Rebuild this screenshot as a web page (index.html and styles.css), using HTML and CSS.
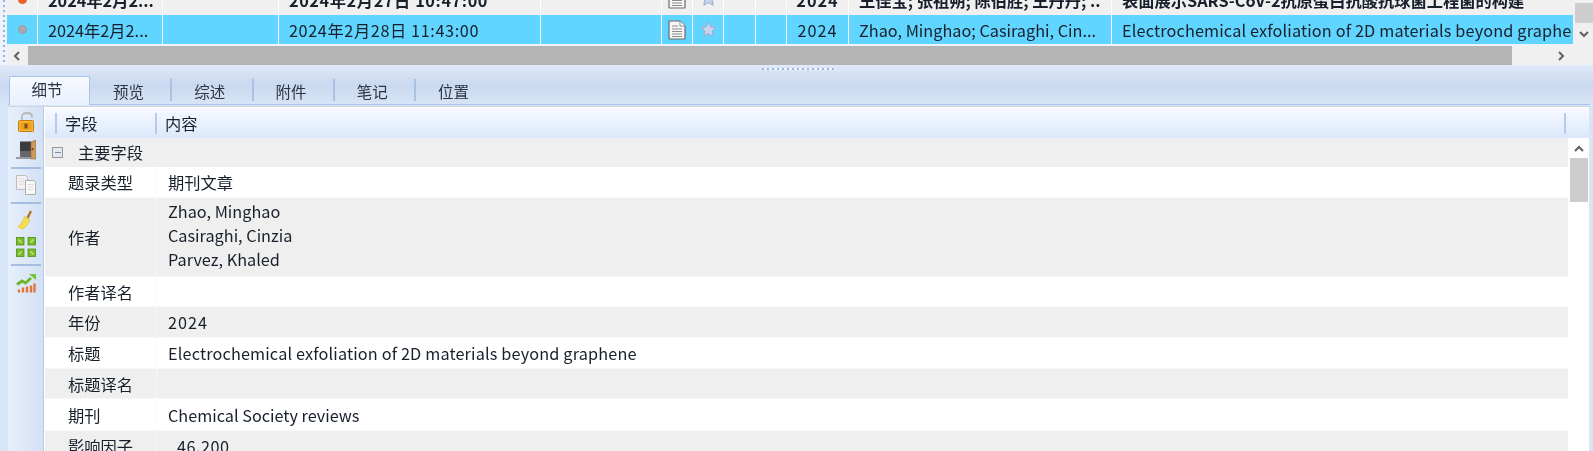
FILE: index.html
```html
<!DOCTYPE html>
<html lang="zh">
<head>
<meta charset="utf-8">
<title>文献详情</title>
<link rel="stylesheet" href="styles.css">
</head>
<body>
<svg class="defs" width="0" height="0" aria-hidden="true">
  <defs>
    <symbol id="doc" viewBox="0 0 18 20">
      <path d="M1 1h11l5 5v12.200q0 .8-.8.8H1.800q-.8 0-.8-.8z" fill="#f6f6f6" stroke="#6a6a6a" stroke-width="1.200"/>
      <path d="M12 1v5h5" fill="#fff" stroke="#8a8a8a"/>
      <path d="M4 6h6M4 9h10M4 11.500h10M4 14h10M4 16.500h10" stroke="#8d8d8d" stroke-width="1"/>
    </symbol>
    <symbol id="star" viewBox="0 0 18 18">
      <path d="M9 1l2.400 5.200 5.600.6-4.200 3.800 1.200 5.600L9 13.400l-5 2.800 1.200-5.600L1 6.800l5.600-.6z" fill="#c6d4ee" stroke="#9aa8c6" stroke-width="1"/>
    </symbol>
  </defs>
</svg>
<div class="edge-dots"></div>

<section class="list">
  <div class="row row-clipped">
    <div class="cell mark"><span class="dot dot-new"></span></div>
    <div class="cell"><span class="clip">2024年2月2...</span></div>
    <div class="cell"></div>
    <div class="cell"><span class="clip num">2024年2月27日 10:47:00</span></div>
    <div class="cell"></div>
    <div class="cell ico"><svg class="i-doc"><use href="#doc"/></svg></div>
    <div class="cell ico"><svg class="i-star"><use href="#star"/></svg></div>
    <div class="cell"></div>
    <div class="cell"></div>
    <div class="cell center"><span class="clip year">2024</span></div>
    <div class="cell"><span class="clip">王佳宝; 张祖朔; 陈伯胜; 王丹丹; ..</span></div>
    <div class="cell"><span class="clip">表面展示SARS-CoV-2抗原蛋白抗酸抗球菌工程菌的构建</span></div>
  </div>
  <div class="row row-selected">
    <div class="cell mark"><span class="dot"></span></div>
    <div class="cell"><span class="clip">2024年2月2...</span></div>
    <div class="cell"></div>
    <div class="cell"><span class="clip num">2024年2月28日 11:43:00</span></div>
    <div class="cell"></div>
    <div class="cell ico"><svg class="i-doc"><use href="#doc"/></svg></div>
    <div class="cell ico"><svg class="i-star"><use href="#star"/></svg></div>
    <div class="cell"></div>
    <div class="cell"></div>
    <div class="cell center"><span class="clip year">2024</span></div>
    <div class="cell"><span class="clip">Zhao, Minghao; Casiraghi, Cin...</span></div>
    <div class="cell"><span class="clip wide">Electrochemical exfoliation of 2D materials beyond graphene</span></div>
  </div>
  <div class="vbar">
    <div class="vthumb"></div>
    <svg class="chev" viewBox="0 0 12 8"><path d="M2 2l4 4 4-4" /></svg>
  </div>
</section>

<div class="hbar">
  <svg class="chev-h" viewBox="0 0 8 12"><path d="M6 2L2 6l4 4"/></svg>
  <div class="hthumb"></div>
  <svg class="chev-h" viewBox="0 0 8 12"><path d="M2 2l4 4-4 4"/></svg>
</div>

<section class="panel">
  <div class="grip"></div>
  <nav class="tabs">
    <span class="tab tab-on">细节</span>
    <span class="tab">预览</span>
    <span class="tab">综述</span>
    <span class="tab">附件</span>
    <span class="tab">笔记</span>
    <span class="tab">位置</span>
  </nav>

  <div class="body">
    <aside class="tools">
      <svg class="tool" viewBox="0 0 20 20">
        <path d="M6 9V4.500C6 2 8 1 11 1s5 1 5 3.500V6" fill="none" stroke="#b9b9b9" stroke-width="1.800"/>
        <rect x="2.500" y="8.500" width="15" height="11" rx="1" fill="#f6b52f" stroke="#c67d12"/>
        <rect x="4.500" y="10.500" width="11" height="7" fill="#eda01f"/>
        <rect x="8.500" y="11.500" width="3" height="5" fill="#7a4f10"/>
      </svg>
      <svg class="tool tool-door" viewBox="0 0 20 20">
        <path d="M0 18h15" stroke="#777" stroke-width="1.400"/>
        <rect x="4" y="1.500" width="11" height="15.500" fill="#3c3c40"/>
        <path d="M4 11h11v6H4z" fill="#66676c"/>
        <path d="M15 2l5-2v19h-5z" fill="#c99a5b" stroke="#94683a" stroke-width=".6"/>
        <rect x="15.800" y="8" width="1.500" height="2.400" fill="#6d4820"/>
      </svg>
      <hr class="sep">
      <svg class="tool" viewBox="0 0 20 20">
        <path d="M.5.500h9l2 2v12h-11z" fill="#f2f2f2" stroke="#bdbdbd"/>
        <path d="M2.500 4h6M2.500 6.500h6M2.500 9h6" stroke="#dcdcdc"/>
        <path d="M9.500 5.500h8l2 2v12h-10z" fill="#f8f8f8" stroke="#aeaeae"/>
        <path d="M11.500 9.500h6M11.500 12h6M11.500 14.500h6" stroke="#dcdcdc"/>
      </svg>
      <hr class="sep">
      <svg class="tool" viewBox="0 0 20 20">
        <path d="M11.500 8L15 1" stroke="#b0752a" stroke-width="2.400"/>
        <path d="M8.500 6.500l5 2.500c-.5 4-3 8-6.500 10-1.500 0-4-1-5-2.500C5 14 7.500 10.500 8.500 6.500z" fill="#f6dd4e" stroke="#dcb92f" stroke-width=".6"/>
      </svg>
      <svg class="tool tool-grid" viewBox="0 0 20 20">
        <g fill="#7dbd2a" stroke="#4c8f17" stroke-width=".8">
          <rect x=".5" y=".5" width="7.500" height="7.500"/>
          <rect x="12" y=".5" width="7.500" height="7.500"/>
          <rect x=".5" y="12" width="7.500" height="7.500"/>
          <rect x="12" y="12" width="7.500" height="7.500"/>
        </g>
        <path d="M2.500 2.500l3 3M17.500 2.500l-3 3M2.500 17.500l3-3M17.500 17.500l-3-3" fill="none" stroke="#c6e792" stroke-width="1.400"/>
      </svg>
      <hr class="sep">
      <svg class="tool tool-chart" viewBox="0 0 20 20">
        <path d="M1 11.500l5-3.500 3.500 2L15 5" fill="none" stroke="#6cb82a" stroke-width="3"/>
        <path d="M13 1h7v6z" fill="#7ac432"/>
        <path d="M3 19.500v-3M7 19.500v-5M11 19.500v-6M15 19.500v-7M18.500 19.500v-9" stroke="#e0763a" stroke-width="2.400"/>
      </svg>
    </aside>

    <div class="sheet">
      <header class="head">
        <span class="h-cell h-field">字段</span>
        <span class="h-cell h-value">内容</span>
      </header>
      <div class="scroll">
        <div class="rows">
          <div class="group"><span class="minus"></span><span class="group-label">主要字段</span></div>
          <div class="r r-31"><div class="k">题录类型</div><div class="v">期刊文章</div></div>
          <div class="r r-alt r-79"><div class="k">作者</div><div class="v v-lines">Zhao, Minghao<br>Casiraghi, Cinzia<br>Parvez, Khaled</div></div>
          <div class="r r-30"><div class="k">作者译名</div><div class="v"></div></div>
          <div class="r r-alt r-31"><div class="k">年份</div><div class="v"><span class="year">2024</span></div></div>
          <div class="r r-31"><div class="k">标题</div><div class="v wide">Electrochemical exfoliation of 2D materials beyond graphene</div></div>
          <div class="r r-alt r-30"><div class="k">标题译名</div><div class="v"></div></div>
          <div class="r r-32"><div class="k">期刊</div><div class="v">Chemical Society reviews</div></div>
          <div class="r r-alt r-31"><div class="k">影响因子</div><div class="v v-num">46.200</div></div>
        </div>
        <div class="sbar">
          <svg class="chev" viewBox="0 0 12 8"><path d="M2 6l4-4 4 4"/></svg>
          <div class="sthumb"></div>
        </div>
      </div>
    </div>
  </div>
</section>
</body>
</html>
```

FILE: styles.css
```css
* { box-sizing: border-box; }
html, body { margin: 0; height: 451px; overflow: hidden; }
body {
  width: 1593px;
  background: #eef3fb;
  font: 16.250px/24px "Noto Sans CJK SC", "Noto Sans", sans-serif;
  color: #18202c;
  display: flex;
  flex-direction: column;
  position: relative;
  filter: blur(.35px);
}
.defs { position: absolute; }
.edge-dots {
  position: absolute;
  left: 3px;
  top: 0;
  width: 2px;
  height: 76px;
  background: repeating-linear-gradient(#9db4d6 0 2px, transparent 2px 5px);
}

.list {
  height: 46px;
  padding-left: 7px;
  background: #eef3fb;
  display: grid;
  grid-template-columns: 1566px 20px;
  grid-template-rows: 15px 29px 2px;
}
.row {
  display: grid;
  grid-template-columns: 31px 125px 116px 262px 121px 31px 31px 32px 31px 62px 263px 1fr;
  grid-column: 1;
}
.row-clipped { background: #f0f0f0; font-weight: 700; }
.row-selected { background: #60d5ff; }
.cell {
  border-right: 1px solid #fff;
  padding-left: 10px;
  display: flex;
  align-items: center;
  overflow: hidden;
  white-space: nowrap;
  min-width: 0;
}
.row-clipped .cell { align-items: flex-end; }
.row-clipped .clip { margin-bottom: 3px; }
.row-clipped .i-doc { margin-bottom: 6px; }
.row-clipped .i-star { margin-bottom: 8px; }
.row-clipped .dot { margin-bottom: 11px; }
.cell:last-child { border-right: 0; }
.mark, .ico { justify-content: center; padding: 0; }
.center { padding: 0; justify-content: center; }
.dot { width: 9px; height: 9px; border-radius: 50%; background: #a6a9ad; border: 1px solid #9a9a9a; flex: none; }
.dot-new { background: #f4612a; border-color: #e0571f; }
.i-doc { width: 18px; height: 20px; flex: none; }
.i-star { width: 17px; height: 17px; flex: none; }
.num { letter-spacing: .6px; }
.year { letter-spacing: 1px; }
.wide { letter-spacing: .15px; }

.vbar {
  grid-column: 2;
  grid-row: 1 / 4;
  background: #f0f0f0;
  margin-left: 1px;
  display: flex;
  flex-direction: column;
  align-items: center;
}
.vthumb { width: 18px; height: 20px; margin-top: 3px; background: #cdcdcd; }
.chev { width: 12px; height: 8px; margin-top: 7px; fill: none; stroke: #606060; stroke-width: 2; flex: none; }

.hbar {
  height: 19px;
  margin-left: 7px;
  background: #f0f0f0;
  display: flex;
  align-items: center;
}
.chev-h { width: 8px; height: 12px; margin: 0 7px 0 6px; fill: none; stroke: #606060; stroke-width: 2; flex: none; }
.chev-h:last-child { margin: 0 0 0 45px; }
.hthumb { width: 1484px; height: 19px; background: #b4b4b4; flex: none; }

.panel {
  flex: 1;
  min-height: 0;
  padding-left: 8px;
  padding-right: 3px;
  background: linear-gradient(#dfeafa 0, #d4e1f3 10px, #c9d9ef 20px, #d8e5f8 40px);
  display: flex;
  flex-direction: column;
  position: relative;
}
.grip {
  position: absolute;
  left: 762px;
  top: 3px;
  width: 74px;
  height: 2px;
  background: repeating-linear-gradient(90deg, #9db4d6 0 2px, #eef4fc 2px 5px);
}
.tabs {
  height: 40px;
  padding-top: 11px;
  padding-left: 1px;
  display: flex;
  flex: none;
  border-bottom: 1px solid #a9c4e8;
}
.tab {
  width: 81.250px;
  height: 28px;
  padding-right: 4px;
  line-height: 31px;
  text-align: center;
  font-size: 15.500px;
  color: #2b3442;
  position: relative;
}
.tab + .tab:not(:nth-child(2))::before {
  content: "";
  position: absolute;
  left: -1px;
  top: 3px;
  bottom: 3px;
  width: 2px;
  background: #aac2e2;
}
.tab-on {
  width: 81px;
  height: 29px;
  margin-bottom: -1px;
  padding-right: 5px;
  line-height: 25px;
  background: linear-gradient(#f7faff, #e9f1fd);
  border: 1px solid #a9c4e8;
  border-bottom: 0;
  border-radius: 2px 2px 0 0;
  position: relative;
  z-index: 1;
}

.body {
  flex: 1;
  min-height: 0;
  margin-top: 1px;
  display: flex;
  border-top: 1px solid #d0d4da;
}
.tools {
  width: 36px;
  flex: none;
  padding: 5px 0 0 1px;
  background: linear-gradient(90deg, #e7effb, #d3e1f5);
  display: flex;
  flex-direction: column;
  align-items: center;
  border-right: 1px solid #b9c9e0;
}
.tool { width: 20px; height: 20px; flex: none; }
.tool-door { margin-top: 8px; }
.tool-grid { margin-top: 7px; }
.tool-chart { margin-top: 1px; }
.sep { width: 30px; height: 2px; margin: 7px 0 6px; border: 0; background: #a5bde0; flex: none; }

.sheet {
  flex: 1;
  min-width: 0;
  margin-right: 1px;
  background: #fff;
  border-left: 1px solid #fff;
  border-top: 1px solid #fff;
  display: flex;
  flex-direction: column;
}
.head {
  height: 30px;
  flex: none;
  background: linear-gradient(#f7faff, #dbe8fb);
  display: flex;
  padding-right: 23px;
}
.h-cell {
  line-height: 30px;
  padding-left: 10px;
  position: relative;
}
.h-cell::before {
  content: "";
  position: absolute;
  left: 0;
  top: 5px;
  height: 21px;
  width: 2px;
  background: #b5cbe8;
}
.h-field { width: 100px; margin-left: 10px; }
.h-value { flex: 1; }
.h-value::after {
  content: "";
  position: absolute;
  right: 0;
  top: 5px;
  height: 21px;
  width: 2px;
  background: #b5cbe8;
}

.scroll { flex: 1; min-height: 0; display: flex; }
.rows { flex: 1; min-width: 0; overflow: hidden; }
.group {
  height: 29px;
  background: #efefef;
  display: flex;
  align-items: center;
  padding-left: 7px;
}
.group-label { margin-top: -2px; }
.minus {
  width: 11px;
  height: 11px;
  margin-right: 15px;
  border: 1px solid #9a9a9a;
  background: linear-gradient(#7f8ea6, #7f8ea6) center / 6px 1px no-repeat #e3e9f3;
}
.r { display: grid; grid-template-columns: 112px 1fr; background: #fff; border-bottom: 1px dotted #f3f3f3; }
.r-alt { background: #efefef; border-bottom-color: #fff; }
.r-30 { height: 30px; }
.r-31 { height: 31px; }
.r-32 { height: 32px; }
.r-79 { height: 79px; }
.k { display: flex; align-items: center; padding-left: 23px; border-right: 1px dotted #f4f4f4; }
.r-alt .k { border-right-color: #fff; }
.v { padding-left: 11px; align-self: center; }
.v-lines { margin-top: -4px; }
.v-num { padding-left: 20px; letter-spacing: .5px; }
.sbar {
  width: 21px;
  flex: none;
  display: flex;
  flex-direction: column;
  align-items: center;
  background: #fff;
}
.sbar .chev { margin-top: 7px; }
.sthumb { width: 18px; height: 44px; margin-top: 5px; background: #cdcdcd; }
```
